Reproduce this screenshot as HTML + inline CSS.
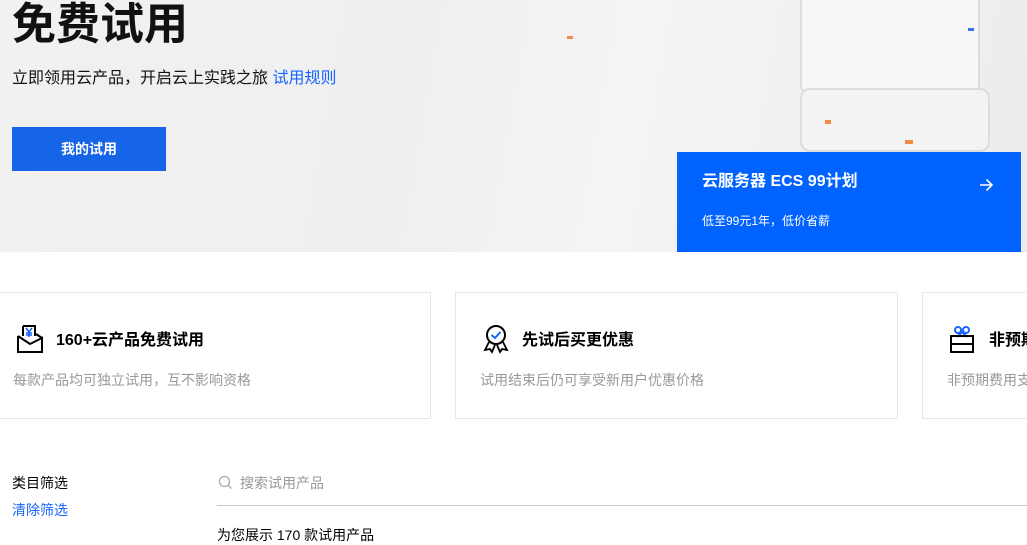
<!DOCTYPE html>
<html><head><meta charset="utf-8"><style>
*{margin:0;padding:0;box-sizing:border-box}
html,body{width:1027px;height:545px;overflow:hidden}
body{background:#fff;font-family:"Liberation Sans","Noto Sans CJK SC",sans-serif;position:relative;color:#000}
.wrap{position:absolute;left:0;top:0;width:1027px;height:545px;overflow:hidden}
.hero{position:absolute;left:0;top:0;width:1027px;height:252px;background:linear-gradient(100deg,#f1f1f2 0%,#efeff0 40%,#f4f4f5 60%,#ececed 100%)}
.a{position:absolute}
.card{position:absolute;top:292px;height:127px;border:1px solid #e6e6e6;background:#fff;overflow:hidden;white-space:nowrap}
.card h3{position:absolute;left:56px;top:33px;font-size:16px;font-weight:bold;color:#000}
.card p{position:absolute;left:24px;top:77px;font-size:14px;color:#999}
.card svg{position:absolute;left:14px;top:31px}
</style></head><body><div class="wrap">
<div class="hero">
 <div class="a" style="left:800px;top:0;width:180px;height:95px;border:2px solid #ddd;border-top:none;border-radius:0 0 10px 10px;background:#f7f7f7"></div>
 <div class="a" style="left:800px;top:88px;width:190px;height:64px;border:2px solid #ddd;border-radius:10px;background:#f3f3f3"></div>
 <div class="a" style="left:968px;top:28px;width:6px;height:3px;background:#3b6cf0"></div>
 <div class="a" style="left:905px;top:140px;width:8px;height:4px;background:#f08a4b"></div>
 <div class="a" style="left:825px;top:120px;width:6px;height:4px;background:#f08a4b"></div>
 <div class="a" style="left:567px;top:36px;width:6px;height:3px;background:#f08a4b"></div>
</div>
<div class="a" style="left:12px;top:0;font-size:44px;font-weight:bold;line-height:50px;color:#111">免费试用</div>
<div class="a" style="left:12px;top:69px;font-size:16px;line-height:20px;color:#111">立即领用云产品，开启云上实践之旅 <span style="color:#1664ff">试用规则</span></div>
<div class="a" style="left:12px;top:127px;width:154px;height:44px;background:#1664e8;color:#fff;font-size:14px;font-weight:bold;text-align:center;line-height:44px">我的试用</div>
<div class="a" style="left:677px;top:152px;width:344px;height:100px;background:#0062ff;color:#fff">
 <div class="a" style="left:25px;top:20px;font-size:16px;font-weight:bold;line-height:20px">云服务器 ECS 99计划</div>
 <div class="a" style="left:25px;top:61px;font-size:12px;line-height:16px">低至99元1年，低价省薪</div>
 <svg class="a" style="left:302px;top:26px" width="14" height="14" viewBox="0 0 14 14"><path d="M1 7H13M7.5 1.5L13 7L7.5 12.5" stroke="#fff" stroke-width="1.6" fill="none"/></svg>
</div>
<div class="card" style="left:-12px;width:443px">
 <svg style="left:27px" width="28" height="30" viewBox="0 0 28 30"><path d="M7 2H19V12M7 2V12" stroke="#000" stroke-width="2" fill="none"/><path d="M10 4L13 8L16 4M13 8V13M10 9H16M10 11H16" stroke="#1664ff" stroke-width="1.6" fill="none"/><path d="M2 12V28H26V14L14 20L2 12" stroke="#000" stroke-width="2" fill="none"/><path d="M20 10L26 14" stroke="#000" stroke-width="2"/></svg>
 <h3 style="left:67px">160+云产品免费试用</h3><p>每款产品均可独立试用，互不影响资格</p></div>
<div class="card" style="left:455px;width:443px">
 <svg style="left:26px" width="28" height="30" viewBox="0 0 28 30"><circle cx="14" cy="11" r="9" stroke="#000" stroke-width="2" fill="none"/><path d="M9.5 11L13 14L18.5 8" stroke="#1664ff" stroke-width="2" fill="none"/><path d="M7 18L3 26L8 25L10 28L13 21M21 18L25 26L20 25L18 28L15 21" stroke="#000" stroke-width="1.8" fill="none"/></svg>
 <h3 style="left:66px">先试后买更优惠</h3><p>试用结束后仍可享受新用户优惠价格</p></div>
<div class="card" style="left:922px;width:130px">
 <svg style="left:26px" width="26" height="30" viewBox="0 0 26 30"><circle cx="9" cy="6" r="3" stroke="#1664ff" stroke-width="2" fill="none"/><circle cx="17" cy="6" r="3" stroke="#1664ff" stroke-width="2" fill="none"/><path d="M8 13L13 8L18 13" stroke="#1664ff" stroke-width="2" fill="none"/><rect x="2" y="12" width="22" height="16" stroke="#000" stroke-width="2" fill="none"/><path d="M2 20H24" stroke="#000" stroke-width="2"/></svg>
 <h3 style="left:66px">非预期费用支持</h3><p>非预期费用支持退还</p></div>
<div class="a" style="left:12px;top:473px;font-size:14px;color:#000">类目筛选</div>
<div class="a" style="left:12px;top:500px;font-size:14px;color:#1664ff">清除筛选</div>
<svg class="a" style="left:218px;top:475px" width="15" height="15" viewBox="0 0 15 15"><circle cx="6.5" cy="6.5" r="5" stroke="#aaa" stroke-width="1.3" fill="none"/><path d="M10 10L13.5 13.5" stroke="#aaa" stroke-width="1.3"/></svg>
<div class="a" style="left:240px;top:473px;font-size:14px;color:#999">搜索试用产品</div>
<div class="a" style="left:217px;top:505px;width:810px;height:1px;background:#c8c8c8"></div>
<div class="a" style="left:217px;top:525px;font-size:14px;color:#000">为您展示 170 款试用产品</div>
</div></body></html>
